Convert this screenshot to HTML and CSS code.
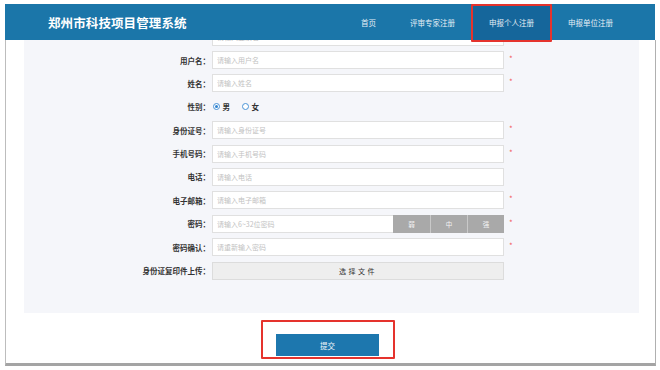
FILE: index.html
```html
<!DOCTYPE html>
<html lang="zh-CN">
<head>
    <meta charset="UTF-8">
    <meta name="viewport" content="width=device-width, initial-scale=1.0">
    <title>郑州市科技项目管理系统 - 申报个人注册</title>
    <link rel="stylesheet" href="styles.css">
</head>
<body>
    <div class="page">
        <header class="topbar">
            <div class="brand">郑州市科技项目管理系统</div>
            <nav class="nav">
                <a href="#" class="nav-item">首页</a>
                <a href="#" class="nav-item">评审专家注册</a>
                <a href="#" class="nav-item active">申报个人注册</a>
                <a href="#" class="nav-item">申报单位注册</a>
            </nav>
        </header>

        <div class="main">
            <div class="panel">
                <form class="reg-form">
                    <!-- row scrolled mostly out of view -->
                    <span></span>
                    <input class="form-input" type="text" placeholder="请输入登录名">
                    <span></span>

                    <label class="form-label">用户名：</label>
                    <input class="form-input" type="text" placeholder="请输入用户名">
                    <span class="required">*</span>

                    <label class="form-label">姓名：</label>
                    <input class="form-input" type="text" placeholder="请输入姓名">
                    <span class="required">*</span>

                    <label class="form-label">性别：</label>
                    <div class="radio-group">
                        <span class="radio-option"><span class="radio checked"></span>男</span>
                        <span class="radio-option"><span class="radio"></span>女</span>
                    </div>
                    <span></span>

                    <label class="form-label">身份证号：</label>
                    <input class="form-input" type="text" placeholder="请输入身份证号">
                    <span class="required">*</span>

                    <label class="form-label">手机号码：</label>
                    <input class="form-input" type="text" placeholder="请输入手机号码">
                    <span class="required">*</span>

                    <label class="form-label">电话：</label>
                    <input class="form-input" type="text" placeholder="请输入电话">
                    <span></span>

                    <label class="form-label">电子邮箱：</label>
                    <input class="form-input" type="text" placeholder="请输入电子邮箱">
                    <span class="required">*</span>

                    <label class="form-label">密码：</label>
                    <div class="password-field">
                        <input class="form-input" type="password" placeholder="请输入6~32位密码">
                        <div class="strength">
                            <span>弱</span>
                            <span>中</span>
                            <span>强</span>
                        </div>
                    </div>
                    <span class="required">*</span>

                    <label class="form-label">密码确认：</label>
                    <input class="form-input" type="password" placeholder="请重新输入密码">
                    <span class="required">*</span>

                    <label class="form-label">身份证复印件上传：</label>
                    <button type="button" class="file-btn">选择文件</button>
                    <span></span>
                </form>
            </div>

            <div class="submit-area">
                <button type="button" class="btn-submit">提交</button>
            </div>
        </div>
    </div>
</body>
</html>
```

FILE: styles.css
```css
body {
    margin: 0;
    background: #fff;
    font-family: "Noto Sans CJK SC", "Noto Sans", sans-serif;
    color: #333;
}
.page {
    width: 651px;
    margin: 4px 0 0 5px;
}
.topbar {
    display: flex;
    align-items: center;
    height: 36px;
    background: #1b76a9;
    margin-right: 1px;
}
.brand {
    padding-left: 43px;
    font-size: 12.5px;
    font-weight: bold;
    color: #fff;
    letter-spacing: 0.1px;
}
.nav {
    display: flex;
    margin-left: auto;
    padding-right: 25px;
    height: 100%;
}
.nav-item {
    display: flex;
    align-items: center;
    padding: 0 17px;
    font-size: 7.5px;
    color: #e6eff6;
    text-decoration: none;
}
.nav-item.active {
    position: relative;
    background: #15669b;
}
.nav-item.active::after {
    content: '';
    position: absolute;
    left: -1px;
    right: -1px;
    top: 0;
    bottom: -2px;
    border: 2px solid #e5332d;
    border-radius: 1px;
}
.main {
    border-left: 1px solid #bdbdbd;
    border-right: 1px solid #b0b0b0;
    border-bottom: 3px solid #a4a4a4;
    padding-bottom: 3.5px;
}
.panel {
    margin: 0 16px 0 18px;
    background: #f5f6fa;
    overflow: hidden;
    padding-bottom: 33.4px;
}
.reg-form {
    display: grid;
    grid-template-columns: 183px 292px 20px;
    grid-auto-rows: 18px;
    column-gap: 5px;
    row-gap: 5.4px;
    margin-top: -12.4px;
    align-items: center;
}
.form-label {
    text-align: right;
    font-size: 7.5px;
    font-weight: bold;
    color: #333;
    margin-right: -3px;
}
.form-input {
    box-sizing: border-box;
    width: 100%;
    height: 18px;
    margin: 0;
    padding: 0 4px;
    border: 1px solid #e0e0e0;
    background: #fff;
    font-family: "Noto Sans CJK SC", sans-serif;
    font-size: 7px;
    outline: none;
}
.form-input::placeholder {
    color: #c2c2c2;
}
.required {
    color: #f25c5c;
    font-size: 8px;
    margin-top: -3px;
}
.radio-group {
    display: flex;
    align-items: center;
    gap: 12px;
    padding-left: 1px;
}
.radio-option {
    display: flex;
    align-items: center;
    gap: 2.5px;
    font-size: 7.5px;
    font-weight: bold;
    color: #333;
}
.radio {
    box-sizing: border-box;
    width: 7px;
    height: 7px;
    border: 1px solid #4a93d6;
    border-radius: 50%;
    background: #fff;
    display: flex;
    align-items: center;
    justify-content: center;
}
.radio.checked::after {
    content: '';
    width: 3px;
    height: 3px;
    border-radius: 50%;
    background: #2f82cf;
}
.password-field {
    display: flex;
    height: 18px;
}
.password-field .form-input {
    flex: 1;
    border-right: none;
}
.strength {
    display: flex;
}
.strength span {
    width: 37px;
    display: flex;
    align-items: center;
    justify-content: center;
    background: #a9a9a9;
    color: #f4f4f4;
    font-size: 6.5px;
    border-left: 1px solid #c9c9c9;
    box-sizing: border-box;
}
.strength span:first-child {
    border-left: none;
}
.file-btn {
    box-sizing: border-box;
    height: 18px;
    margin: 0;
    border: 1px solid #dcdcdc;
    background: #eeeeee;
    font-family: "Noto Sans CJK SC", sans-serif;
    font-size: 7px;
    letter-spacing: 2.5px;
    color: #333;
    padding-left: 6px;
}
.submit-area {
    box-sizing: border-box;
    width: 134px;
    height: 39px;
    margin: 7.5px auto 0;
    padding-top: 12px;
    border: 2px solid #e5332d;
    border-radius: 1px;
    display: flex;
    justify-content: center;
    position: relative;
    left: -3px;
}
.btn-submit {
    width: 103px;
    height: 22px;
    border: none;
    background: #1d77ae;
    color: #eef4f9;
    font-family: "Noto Sans CJK SC", sans-serif;
    font-size: 7.5px;
}
```
